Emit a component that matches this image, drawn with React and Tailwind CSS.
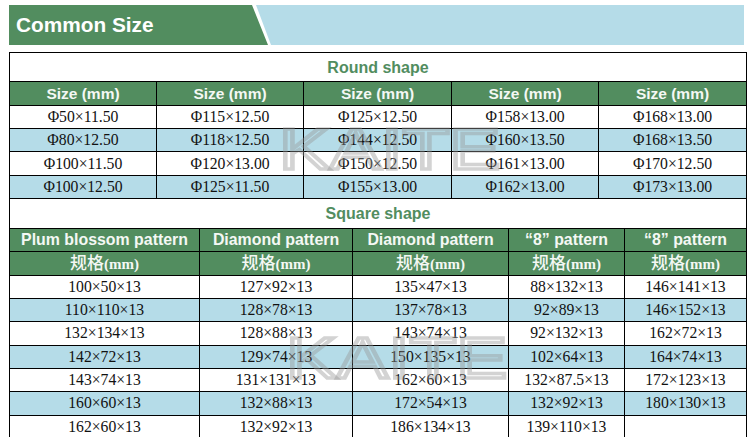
import React from "react";

const roundRows = [
  { h: "h-[23px]", bg: "bg-white", cells: ["Φ50×11.50", "Φ115×12.50", "Φ125×12.50", "Φ158×13.00", "Φ168×13.00"] },
  { h: "h-[23px]", bg: "bg-[#b5dce8]", cells: ["Φ80×12.50", "Φ118×12.50", "Φ144×12.50", "Φ160×13.50", "Φ168×13.50"] },
  { h: "h-[24px]", bg: "bg-white", cells: ["Φ100×11.50", "Φ120×13.00", "Φ150×12.50", "Φ161×13.00", "Φ170×12.50"] },
  { h: "h-[23px]", bg: "bg-[#b5dce8]", cells: ["Φ100×12.50", "Φ125×11.50", "Φ155×13.00", "Φ162×13.00", "Φ173×13.00"] },
];

const squareRows = [
  { h: "h-[23px]", bg: "bg-white", cells: ["100×50×13", "127×92×13", "135×47×13", "88×132×13", "146×141×13"] },
  { h: "h-[23px]", bg: "bg-[#b5dce8]", cells: ["110×110×13", "128×78×13", "137×78×13", "92×89×13", "146×152×13"] },
  { h: "h-[24px]", bg: "bg-white", cells: ["132×134×13", "128×88×13", "143×74×13", "92×132×13", "162×72×13"] },
  { h: "h-[23px]", bg: "bg-[#b5dce8]", cells: ["142×72×13", "129×74×13", "150×135×13", "102×64×13", "164×74×13"] },
  { h: "h-[23px]", bg: "bg-white", cells: ["143×74×13", "131×131×13", "162×60×13", "132×87.5×13", "172×123×13"] },
  { h: "h-[24px]", bg: "bg-[#b5dce8]", cells: ["160×60×13", "132×88×13", "172×54×13", "132×92×13", "180×130×13"] },
  { h: "h-[23px]", bg: "bg-white", cells: ["162×60×13", "132×92×13", "186×134×13", "139×110×13", ""] },
];

const patterns = ["Plum blossom pattern", "Diamond pattern", "Diamond pattern", "“8” pattern", "“8” pattern"];

const Cell = ({ children, className = "", colSpan }) => (
  <td colSpan={colSpan} className={`border border-black p-0 text-center align-middle leading-none ${className}`}>
    {children}
  </td>
);

const DataRows = ({ rows }) =>
  rows.map((row, i) => (
    <tr key={i} className={`${row.h} ${row.bg}`}>
      {row.cells.map((cell, j) => (
        <Cell key={j} className="font-['Liberation_Serif',serif] text-[15.7px] text-[#111]">
          {cell}
        </Cell>
      ))}
    </tr>
  ));

const Watermark = ({ className }) => (
  <span
    className={`pointer-events-none absolute origin-top-left scale-x-[1.32] font-['Liberation_Sans',sans-serif] text-[58px] leading-none text-transparent [-webkit-text-stroke:3.5px_rgba(150,150,150,0.42)] ${className}`}
  >
    KAITE
  </span>
);

export default function App() {
  return (
    <div className="relative h-[437px] w-[750px] overflow-hidden bg-white">
      <div className="mt-[5px] flex h-[40px] w-[735px] translate-x-[9px]">
        <div className="flex h-full w-[259px] items-center bg-[#528d5f] pl-[7px] [clip-path:polygon(0_0,243px_0,100%_100%,0_100%)]">
          <span className="font-['Liberation_Sans',sans-serif] text-[20.8px] font-bold text-white">Common Size</span>
        </div>
        <div className="-ml-[12px] h-full flex-1 bg-[#b5dce8] [clip-path:polygon(0_0,100%_0,100%_100%,15px_100%)]" />
      </div>

      <table className="ml-[9px] mt-[7px] w-[737px] table-fixed border-collapse">
        <colgroup>
          <col className="w-[147px]" />
          <col className="w-[147px]" />
          <col className="w-[148px]" />
          <col className="w-[147px]" />
          <col className="w-[148px]" />
        </colgroup>
        <tbody>
          <tr className="h-[29px]">
            <Cell colSpan={5} className="bg-white pt-[2px] font-['Liberation_Sans',sans-serif] text-[16px] font-bold text-[#528d5f]">
              Round shape
            </Cell>
          </tr>
          <tr className="h-[24px] bg-[#528d5f]">
            {[0, 1, 2, 3, 4].map((i) => (
              <Cell key={i} className="font-['Liberation_Sans',sans-serif] text-[15.5px] font-bold text-[#f4f8f4]">
                Size (mm)
              </Cell>
            ))}
          </tr>
          <DataRows rows={roundRows} />
        </tbody>
      </table>

      <table className="ml-[9px] w-[737px] table-fixed border-collapse">
        <colgroup>
          <col className="w-[190px]" />
          <col className="w-[153px]" />
          <col className="w-[156px]" />
          <col className="w-[116px]" />
          <col className="w-[122px]" />
        </colgroup>
        <tbody>
          <tr className="h-[29px]">
            <td
              colSpan={5}
              className="border border-t-0 border-black bg-white p-0 pt-[2px] text-center align-middle font-['Liberation_Sans',sans-serif] text-[16px] font-bold leading-none text-[#528d5f]"
            >
              Square shape
            </td>
          </tr>
          <tr className="h-[23px] bg-[#528d5f]">
            {patterns.map((name, i) => (
              <Cell key={i} className="font-['Liberation_Sans',sans-serif] text-[15.9px] font-bold text-[#f4f8f4]">
                {name}
              </Cell>
            ))}
          </tr>
          <tr className="h-[24px] bg-[#528d5f]">
            {[0, 1, 2, 3, 4].map((i) => (
              <Cell key={i} className="font-['Liberation_Serif','Noto_Sans_CJK_SC',serif] text-[15px] font-bold text-[#f4f8f4]">
                <span className="text-[17px] font-medium">规格</span>(mm)
              </Cell>
            ))}
          </tr>
          <DataRows rows={squareRows} />
        </tbody>
      </table>

      <Watermark className="left-[279px] top-[120px]" />
      <Watermark className="left-[286px] top-[329px]" />
    </div>
  );
}
